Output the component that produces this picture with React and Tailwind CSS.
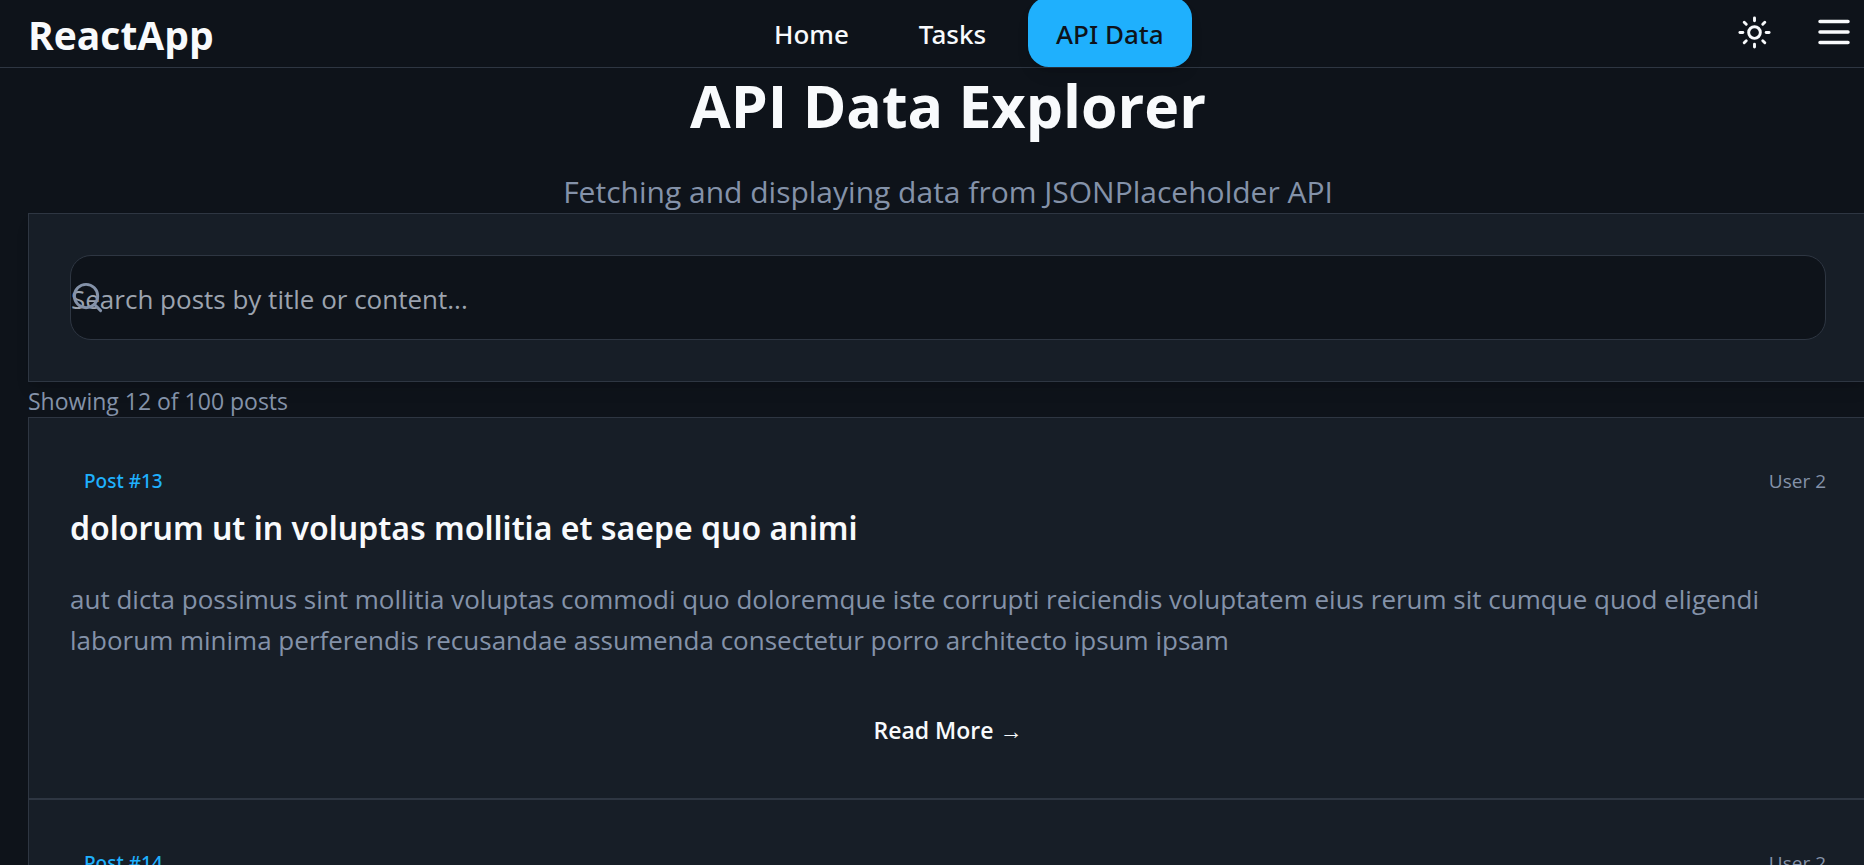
import { Search, Sun } from "lucide-react";

const links = [
  { label: "Home", active: false },
  { label: "Tasks", active: false },
  { label: "API Data", active: true },
];

const posts = [
  {
    id: 13,
    user: 2,
    title: "dolorum ut in voluptas mollitia et saepe quo animi",
    body: "aut dicta possimus sint mollitia voluptas commodi quo doloremque iste corrupti reiciendis voluptatem eius rerum sit cumque quod eligendi laborum minima perferendis recusandae assumenda consectetur porro architecto ipsum ipsam",
  },
  {
    id: 14,
    user: 2,
    title: "voluptatem eligendi optio",
    body: "fuga et accusamus dolorum perferendis illo voluptas non doloremque neque facere ad qui dolorum molestiae beatae sed aut voluptas totam sit illum",
  },
];

function MenuIcon() {
  return (
    <svg
      className="size-[42px]"
      viewBox="0 0 24 24"
      fill="none"
      stroke="currentColor"
      strokeWidth="2"
      strokeLinecap="round"
      aria-hidden="true"
    >
      <path d="M4 6h16M4 12h16M4 18h16" />
    </svg>
  );
}

function Header() {
  return (
    <header className="flex h-[68px] items-end justify-between border-b border-[#2e3642] pr-[9px] pl-7">
      <a href="#home" className="text-[39px] leading-[64px] font-bold text-slate-50">
        ReactApp
      </a>
      <nav className="flex gap-3.5 font-['Noto_Sans','Open_Sans',sans-serif]">
        {links.map((link) => (
          <a
            key={link.label}
            href="#page"
            className={
              link.active
                ? "rounded-[21px] bg-[#1fb0fd] px-7 pt-4 pb-3 text-[26px] leading-[42px] font-medium text-[#0e131a] shadow-lg"
                : "rounded-[21px] px-7 pt-4 pb-3 text-[26px] leading-[42px] font-medium text-slate-50"
            }
          >
            {link.label}
          </a>
        ))}
      </nav>
      <div className="flex h-[70px] items-center gap-7 text-slate-50">
        <button type="button" aria-label="Toggle theme" className="px-[13px]">
          <Sun className="size-[35px]" />
        </button>
        <button type="button" aria-label="Open menu">
          <MenuIcon />
        </button>
      </div>
    </header>
  );
}

function PostCard({ post }) {
  return (
    <article className="border border-[#2e3642] bg-[#171e27] p-[41px]">
      <div className="flex items-center justify-between text-[19px] leading-7">
        <span className="px-3.5 py-2 font-['Noto_Sans','Open_Sans',sans-serif] font-medium text-[#1fb0fd]">
          Post #{post.id}
        </span>
        <span className="text-[#8492a9]">User {post.user}</span>
      </div>
      <h3 className="font-['Noto_Sans','Open_Sans',sans-serif] text-[32px] leading-[49px] font-semibold text-slate-50">
        {post.title}
      </h3>
      <p className="mt-[27px] text-[26px] leading-[41px] text-[#8492a9]">{post.body}</p>
      <button
        type="button"
        className="mt-[42px] block w-full pt-2.5 pb-[9px] text-[23px] leading-[35px] font-semibold text-slate-50"
      >
        Read More →
      </button>
    </article>
  );
}

export default function App() {
  return (
    <div className="h-screen overflow-hidden bg-[#0e131a] font-['Open_Sans','Noto_Sans',sans-serif]">
      <Header />
      <main className="-mr-1 ml-7">
        <div className="text-center">
          <h1 className="text-[59px] leading-[74px] font-bold text-slate-50">API Data Explorer</h1>
          <p className="mt-7 text-[30px] leading-[43px] text-[#8492a9]">
            Fetching and displaying data from JSONPlaceholder API
          </p>
        </div>
        <div className="border border-[#2e3642] bg-[#171e27] p-[41px] shadow-lg">
          <div className="relative">
            <Search className="absolute top-[25px] left-0 size-[35px] text-[#8492a9]" />
            <input
              type="text"
              aria-label="Search posts"
              placeholder="Search posts by title or content..."
              className="block h-[85px] w-full rounded-[21px] border border-[#2e3642] bg-[#0e131a] pt-0.5 text-[26px] text-slate-50 placeholder:text-[#9ca3af]"
            />
          </div>
        </div>
        <p className="pt-1 text-[23px] leading-[31px] text-[#8492a9]">Showing 12 of 100 posts</p>
        <div>
          {posts.map((post) => (
            <PostCard key={post.id} post={post} />
          ))}
        </div>
      </main>
    </div>
  );
}
